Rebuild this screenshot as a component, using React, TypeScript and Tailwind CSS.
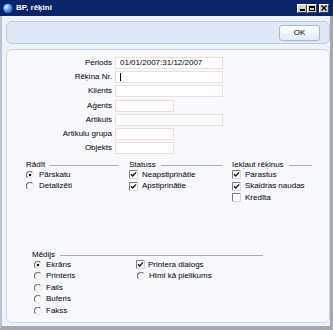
import React from 'react';

const Radio = ({ on }: { on?: boolean }) => (
  <svg width="8" height="8" viewBox="0 0 8 8" className="shrink-0">
    <circle cx="4" cy="4" r="3.4" fill="#fff" />
    <path d="M6.5 1.5 A3.4 3.4 0 0 0 1.5 6.5" fill="none" stroke="#6f6f6f" strokeWidth="1.1" />
    <path d="M1.5 6.5 A3.4 3.4 0 0 0 6.5 1.5" fill="none" stroke="#e4e4e4" strokeWidth="1" />
    {on && <circle cx="4" cy="4" r="1.3" fill="#111" />}
  </svg>
);

const Check = ({ on }: { on?: boolean }) => (
  <svg width="9" height="9" viewBox="0 0 9 9" className="shrink-0">
    <rect x="0" y="0" width="9" height="9" fill="#fff" />
    <path d="M0.5 8.5 V0.5 H8.5" fill="none" stroke="#7a7a7a" strokeWidth="1" />
    <path d="M8.5 0.5 V8.5 H0.5" fill="none" stroke="#d8d8d8" strokeWidth="1" />
    {on && <path d="M2 4.2 L3.7 6 L7 2.4" fill="none" stroke="#111" strokeWidth="1.4" />}
  </svg>
);

const Header = ({ text }: { text: string }) => (
  <div className="flex items-center h-[9px]">
    <span className="leading-[9px] whitespace-nowrap">{text}</span>
    <div className="flex-1 h-px bg-[#a9a9a9] ml-[5px] mt-[2px]" />
  </div>
);

const Opt = ({ label, kind, on, gap }: { label: string; kind: 'r' | 'c'; on?: boolean; gap: string }) => (
  <div className="flex items-center h-[11.5px]">
    {kind === 'r' ? <Radio on={on} /> : <Check on={on} />}
    <span className={`${gap} leading-[10px] whitespace-nowrap`}>{label}</span>
  </div>
);

const fields: { label: string; wide: boolean; value?: string; caret?: boolean }[] = [
  { label: 'Periods', wide: true, value: '01/01/2007:31/12/2007' },
  { label: 'Rēķina Nr.', wide: true, caret: true },
  { label: 'Klients', wide: true },
  { label: 'Aģents', wide: false },
  { label: 'Artikuls', wide: true },
  { label: 'Artikulu grupa', wide: false },
  { label: 'Objekts', wide: false },
];

const TitleBtn = ({ children, className = '' }: { children: React.ReactNode; className?: string }) => (
  <div className={`w-[10px] h-[9px] bg-[#d4d0c8] border-t border-l border-t-white border-l-white border-b border-r border-b-[#404040] border-r-[#404040] flex items-center justify-center text-black ${className}`}>
    {children}
  </div>
);

export default function App() {
  return (
    <div className="w-[333px] h-[330px] flex flex-col bg-[#eef3fa] text-[8px] text-black overflow-hidden" style={{ fontFamily: '"Liberation Sans", Arial, sans-serif' }}>
      {/* title bar */}
      <div className="h-[16px] shrink-0 bg-[#0a246a] flex items-center pl-[3px] pr-[4px]">
        <svg width="10" height="11" viewBox="0 0 10 11">
          <defs>
            <radialGradient id="g" cx="0.35" cy="0.35" r="0.7">
              <stop offset="0" stopColor="#e8f4ff" />
              <stop offset="0.5" stopColor="#5aa2e6" />
              <stop offset="1" stopColor="#1c4fa0" />
            </radialGradient>
          </defs>
          <circle cx="5" cy="5.5" r="4.8" fill="url(#g)" />
        </svg>
        <span className="ml-[3px] text-white font-bold leading-none">BP, rēķini</span>
        <div className="flex-1" />
        <TitleBtn>
          <div className="w-[5px] h-[1.5px] bg-black mt-[4px]" />
        </TitleBtn>
        <TitleBtn>
          <div className="w-[6px] h-[5px] border border-black border-t-2" />
        </TitleBtn>
        <TitleBtn className="ml-[2px]">
          <svg width="6" height="6" viewBox="0 0 6 6">
            <path d="M0.5 0.5 L5.5 5.5 M5.5 0.5 L0.5 5.5" stroke="#000" strokeWidth="1.3" />
          </svg>
        </TitleBtn>
      </div>

      {/* body */}
      <div className="flex-1 flex flex-col border-l-2 border-r-[3px] border-b-4 border-l-[#b9c3d3] border-r-[#a4a8b0] border-b-[#a4a8b0] pl-[4px] pr-[0px]">
        {/* toolbar */}
        <div className="mt-[5px] h-[23px] rounded-[6px] border border-[#b7cae6] bg-[#dfe8f6] flex items-center justify-end pr-[9px]">
          <div className="w-[41px] h-[16px] rounded-[3px] border border-[#a8b7cd] bg-gradient-to-b from-white to-[#e4ebf5] flex items-center justify-center">
            OK
          </div>
        </div>

        {/* main panel */}
        <div className="mt-[5px] h-[274px] rounded-[6px] border border-[#c6d5ea] bg-[#f7f9fd] flex flex-col">
          <div className="pt-[7px] grid grid-cols-[105px_auto] gap-x-[3px] gap-y-[2.2px]">
            {fields.map((f) => (
              <React.Fragment key={f.label}>
                <div className="text-right leading-[12px] h-[12px] whitespace-nowrap">{f.label}</div>
                <div className={`h-[12px] bg-white border border-[#eddfd5] flex items-center pl-[4px] ${f.wide ? 'w-[108px]' : 'w-[59px]'}`}>
                  {f.value && <span className="leading-[10px]">{f.value}</span>}
                  {f.caret && <div className="w-px h-[8px] bg-black" />}
                </div>
              </React.Fragment>
            ))}
          </div>

          {/* options */}
          <div className="mt-[6px] ml-[19px] flex items-start">
            <div className="w-[92px]">
              <Header text="Rādīt" />
              <Opt kind="r" on label="Pārskatu" gap="ml-[5px]" />
              <Opt kind="r" label="Detalizēti" gap="ml-[5px]" />
            </div>
            <div className="w-[93px] ml-[11px]">
              <Header text="Statuss" />
              <Opt kind="c" on label="Neapstiprinātie" gap="ml-[4px]" />
              <Opt kind="c" on label="Apstiprinātie" gap="ml-[4px]" />
            </div>
            <div className="w-[80px] ml-[10px]">
              <Header text="Iekļaut rēķinus" />
              <Opt kind="c" on label="Parastus" gap="ml-[4px]" />
              <Opt kind="c" on label="Skaidras naudas" gap="ml-[4px]" />
              <Opt kind="c" label="Kredīta" gap="ml-[4px]" />
            </div>
          </div>

          {/* media */}
          <div className="mt-[46.5px] ml-[25px] w-[231px]">
            <Header text="Mēdijs" />
            <div className="flex items-start">
              <div className="w-[104px] pl-[2px]">
                <Opt kind="r" on label="Ekrāns" gap="ml-[4px]" />
                <Opt kind="r" label="Printeris" gap="ml-[4px]" />
                <Opt kind="r" label="Fails" gap="ml-[4px]" />
                <Opt kind="r" label="Buferis" gap="ml-[4px]" />
                <Opt kind="r" label="Fakss" gap="ml-[4px]" />
              </div>
              <div>
                <Opt kind="c" on label="Printera dialogs" gap="ml-[3px]" />
                <div className="pl-[1px]">
                  <Opt kind="r" label="Html kā pielikums" gap="ml-[4px]" />
                </div>
              </div>
            </div>
          </div>
        </div>
      </div>
    </div>
  );
}
